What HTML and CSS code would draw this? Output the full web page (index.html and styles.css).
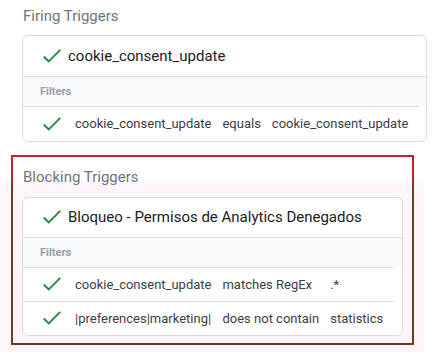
FILE: index.html
```html
<!DOCTYPE html>
<html lang="en">
<head>
    <meta charset="UTF-8">
    <meta name="viewport" content="width=device-width, initial-scale=1.0">
    <title>Triggers</title>
    <link rel="stylesheet" href="styles.css">
</head>
<body>

    <section class="group">
        <h3 class="group-title">Firing Triggers</h3>
        <div class="card">
            <div class="card-head">
                <svg class="check" viewBox="3.4 5.6 17.6 13.4"><path d="M9 16.17L4.83 12l-1.42 1.41L9 19 21 7l-1.41-1.41z"/></svg>
                <span>cookie_consent_update</span>
            </div>
            <div class="filters-label">Filters</div>
            <table class="filters">
                <tr>
                    <td class="ok"><svg class="check" viewBox="3.4 5.6 17.6 13.4"><path d="M9 16.17L4.83 12l-1.42 1.41L9 19 21 7l-1.41-1.41z"/></svg></td>
                    <td>cookie_consent_update</td>
                    <td>equals</td>
                    <td>cookie_consent_update</td>
                </tr>
            </table>
        </div>
    </section>

    <section class="group blocking">
        <h3 class="group-title">Blocking Triggers</h3>
        <div class="card">
            <div class="card-head">
                <svg class="check" viewBox="3.4 5.6 17.6 13.4"><path d="M9 16.17L4.83 12l-1.42 1.41L9 19 21 7l-1.41-1.41z"/></svg>
                <span>Bloqueo - Permisos de Analytics Denegados</span>
            </div>
            <div class="filters-label">Filters</div>
            <table class="filters">
                <tr>
                    <td class="ok"><svg class="check" viewBox="3.4 5.6 17.6 13.4"><path d="M9 16.17L4.83 12l-1.42 1.41L9 19 21 7l-1.41-1.41z"/></svg></td>
                    <td>cookie_consent_update</td>
                    <td>matches RegEx</td>
                    <td>.*</td>
                </tr>
                <tr>
                    <td class="ok"><svg class="check" viewBox="3.4 5.6 17.6 13.4"><path d="M9 16.17L4.83 12l-1.42 1.41L9 19 21 7l-1.41-1.41z"/></svg></td>
                    <td>|preferences|marketing|</td>
                    <td>does not contain</td>
                    <td>statistics</td>
                </tr>
            </table>
        </div>
    </section>

</body>
</html>
```

FILE: styles.css
```css
body {
    margin: 0;
    font-family: Roboto, "Liberation Sans", sans-serif;
    color: #3c4043;
    background: #fff linear-gradient(#fdf5fa, #fdf5fa) no-repeat 0 183px / 424px 169px;
}
.group {
    padding-left: 22px;
    width: 405px;
}
.group-title {
    margin: 6px 0 9px 1px;
    font-size: 15px;
    line-height: 20px;
    font-weight: 400;
    color: #70757a;
}
.blocking {
    margin: 13px 0 0 11px;
    padding: 10px 9px 7px 9px;
    width: 381px;
    border: 2px solid #b0222a;
    border-image: linear-gradient(to bottom, #cc1f2b 0 27px, #6e3b22 27px) 2;
}
.blocking .group-title {
    margin: 0 0 10px 1px;
}
.card {
    background: #fff;
    border: 1px solid #dadce0;
    border-radius: 6px;
    overflow: hidden;
}
.card-head {
    display: flex;
    align-items: center;
    height: 40px;
    padding-left: 20px;
    font-size: 15px;
    color: #202124;
    border-bottom: 1px solid #dadce0;
}
.blocking .card-head {
    height: 39px;
}
.card-head .check {
    margin-right: 7px;
}
.check {
    display: block;
    width: 18px;
    height: 14px;
    fill: #2b8a45;
}
.filters-label {
    height: 29px;
    line-height: 29px;
    padding-left: 17px;
    font-size: 11px;
    font-weight: 700;
    color: #9aa0a6;
    background: #f8f9fa;
}
.filters {
    border-collapse: collapse;
    font-size: 13px;
}
.filters tr {
    height: 34px;
    border-top: 1px solid #dadce0;
}
.filters td {
    padding: 0 11px 0 0;
    white-space: nowrap;
}
.filters td.ok {
    padding: 0 14px 0 20px;
}
```
